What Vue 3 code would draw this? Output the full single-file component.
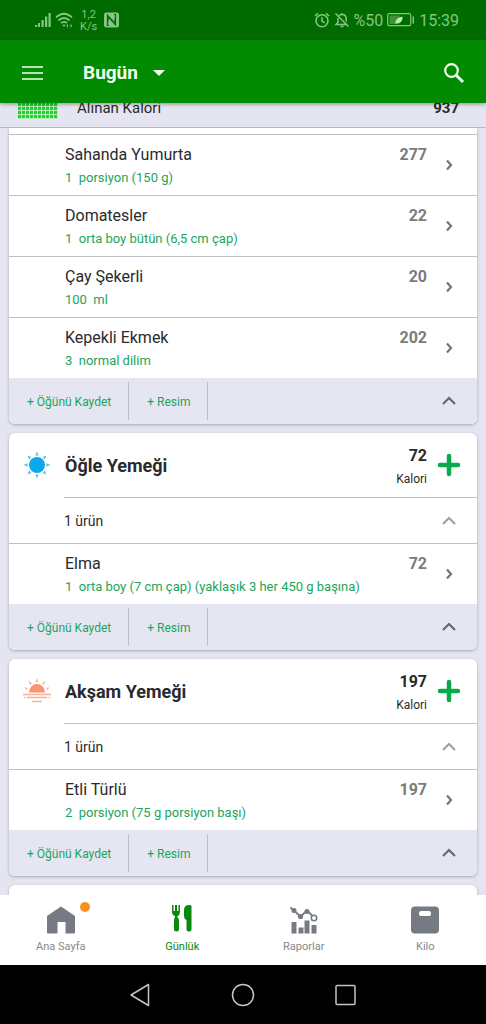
<script setup>
import { ref } from 'vue'

const breakfast = [
  { name: 'Sahanda Yumurta', qty: '1', unit: 'porsiyon (150 g)', kcal: 277 },
  { name: 'Domatesler', qty: '1', unit: 'orta boy bütün (6,5 cm çap)', kcal: 22 },
  { name: 'Çay Şekerli', qty: '100', unit: 'ml', kcal: 20 },
  { name: 'Kepekli Ekmek', qty: '3', unit: 'normal dilim', kcal: 202 }
]

const meals = [
  { id: 'breakfast', items: breakfast },
  {
    id: 'lunch',
    title: 'Öğle Yemeği',
    total: 72,
    count: '1 ürün',
    items: [{ name: 'Elma', qty: '1', unit: 'orta boy (7 cm çap) (yaklaşık 3 her 450 g başına)', kcal: 72 }]
  },
  {
    id: 'dinner',
    title: 'Akşam Yemeği',
    total: 197,
    count: '1 ürün',
    items: [{ name: 'Etli Türlü', qty: '2', unit: 'porsiyon (75 g porsiyon başı)', kcal: 197 }]
  }
]

const tabs = [
  { id: 'home', label: 'Ana Sayfa' },
  { id: 'diary', label: 'Günlük' },
  { id: 'reports', label: 'Raporlar' },
  { id: 'weight', label: 'Kilo' }
]
const active = ref('diary')
const rays = [0, 45, 90, 135, 180, 225, 270, 315]
</script>

<template>
  <div class="screen">
    <div class="status">
      <svg class="signal" width="16" height="16" viewBox="0 0 16 16" fill="currentColor">
        <path d="M0 13h2v2H0zM3 11h2v4H3zM6.500 8h2.200v7H6.500zM10 4.500h2.200V15H10zM13.500 1h2.200v14h-2.200z" />
      </svg>
      <svg class="wifi" width="18" height="16" viewBox="0 0 18 16" fill="none" stroke="currentColor" stroke-width="1.700">
        <path d="M1 5.500Q9-2 17 5.500M3.500 8.500Q9 3.500 14.500 8.500M6 11.200Q9 8.500 12 11" />
        <path d="M7.300 12.800h3.400L9 15zM11.300 13.800l1.700-2v4zM17.200 13.800l-1.700-2v4z" fill="currentColor" stroke="none" />
      </svg>
      <div class="speed"><span>1,2</span><span>K/s</span></div>
      <svg class="nfc" width="15" height="16" viewBox="0 0 15 16">
        <rect y=".5" width="15" height="15" rx="2.500" fill="currentColor" />
        <path d="M5 13.500H3.500V3.200L11 11.500V6M10 2.500h1.500v10.300L4 4.500V10" fill="none" stroke="#006c00" stroke-width="1.200" />
      </svg>
      <span class="grow"></span>
      <svg class="alarm" width="16" height="16" viewBox="0 0 16 16" fill="none" stroke="currentColor" stroke-width="1.600">
        <circle cx="8" cy="8.800" r="6" />
        <path d="M8 5.200v3.800l2.600 1.800M1 4l3-2.600M15 4l-3-2.600" />
      </svg>
      <svg class="bell" width="16" height="16" viewBox="0 0 16 16" fill="none" stroke="currentColor" stroke-width="1.500">
        <path d="M5 3.600C6 2.700 7 2.600 8 2.600c3 0 4.200 2 4.200 4.600v2.200M3.900 6v4.500L2 12.600h10.500M6.500 14.500h3M8 1v1.600M1.500 1.500l13 13" />
      </svg>
      <span class="percent">%50</span>
      <svg class="battery" width="28" height="14" viewBox="0 0 28 14">
        <rect x=".7" y=".7" width="23" height="12" rx="1.500" fill="none" stroke="currentColor" stroke-width="1.200" />
        <rect x="2.500" y="2.500" width="10" height="8.500" fill="currentColor" opacity=".45" />
        <path d="M8.500 11c-.5-4 2-6.500 7-7.500.4 4-1.500 7-6 6.800z" fill="#c2eda9" />
        <rect x="25.500" y="3.500" width="1.500" height="7" fill="currentColor" />
      </svg>
      <span class="clock">15:39</span>
    </div>

    <header class="appbar">
      <button class="menu" aria-label="Menü">
        <svg width="22" height="16" viewBox="0 0 22 16" fill="currentColor"><path d="M0 1h21v2H0zM0 7h21v2H0zM0 13h21v2H0z" /></svg>
      </button>
      <button class="day">
        <span>Bugün</span>
        <svg width="12" height="6" viewBox="0 0 12 6" fill="currentColor"><path d="M0 0h12L6 6z" /></svg>
      </button>
      <button class="search" aria-label="Ara">
        <svg width="22" height="22" viewBox="0 0 22 22" fill="none" stroke="currentColor">
          <circle cx="8.500" cy="8.500" r="6.300" stroke-width="2.200" />
          <path d="M13 13l7 7" stroke-width="3" />
        </svg>
      </button>
    </header>

    <div class="summary">
      <svg width="40" height="40" viewBox="0 0 40 40">
        <defs>
          <pattern id="cells" width="4" height="4" patternUnits="userSpaceOnUse">
            <rect width="4" height="4" fill="#b5f3b5" />
            <rect width="3" height="3" fill="#22cf35" />
          </pattern>
        </defs>
        <rect width="40" height="40" fill="url(#cells)" />
      </svg>
      <span class="summary-label">Alınan Kalori</span>
      <span class="summary-value">937</span>
    </div>

    <main class="diary">
      <section v-for="meal in meals" :key="meal.id" class="card" :class="{ partial: !meal.title }">
        <template v-if="meal.title">
          <div class="meal-head">
            <svg v-if="meal.id === 'lunch'" class="meal-icon" width="28" height="28" viewBox="-14 -14 28 28">
              <circle r="8" fill="#0aa9ee" />
              <path v-for="r in rays" :key="r" d="M-1.700-9.500h3.400L0-13.500z" :transform="`rotate(${r})`" fill="#5cc5dc" />
            </svg>
            <svg v-else class="meal-icon" width="28" height="28" viewBox="0 0 28 28">
              <path d="M6 15.500a8 8.500 0 0 1 16 0z" fill="#fb9472" />
              <path d="M12.700 5h2.600L14 1zM7.200 8L9 6.200 5.500 3.800zM20.800 8L19 6.200l3.500-2.400zM3.600 13.200l1-2.500-3-.2zM24.400 13.200l-1-2.500 3-.2z" fill="#f6b09a" />
              <path d="M0 17.500h28M4 20.500h20M1 20.500h1.500M25.500 20.500H27M9 24.500h10" stroke="#f9b09a" stroke-width="1.400" />
            </svg>
            <h2>{{ meal.title }}</h2>
            <div class="total"><strong>{{ meal.total }}</strong><span>Kalori</span></div>
            <button class="side-btn" aria-label="Ekle">
              <svg width="24" height="24" viewBox="0 0 24 24" fill="none" stroke="#07ab4b" stroke-width="4.500" stroke-linecap="round"><path d="M12 3v18M3 12h18" /></svg>
            </button>
          </div>
          <div class="count">
            <span>{{ meal.count }}</span>
            <button class="side-btn pale" aria-label="Daralt">
              <svg width="14" height="10" viewBox="0 0 14 10" fill="none" stroke="currentColor" stroke-width="2.200"><path d="M1 8l6-6 6 6" /></svg>
            </button>
          </div>
        </template>
        <ul>
          <li v-for="item in meal.items" :key="item.name">
            <div class="food">
              <span class="name">{{ item.name }}</span>
              <span class="portion">{{ item.qty + '  ' + item.unit }}</span>
            </div>
            <span class="kcal">{{ item.kcal }}</span>
            <button class="side-btn" :aria-label="item.name">
              <svg width="8" height="12" viewBox="0 0 8 12" fill="none" stroke="currentColor" stroke-width="2.200"><path d="M2 1.500L6 6l-4 4.500" /></svg>
            </button>
          </li>
        </ul>
        <div class="foot">
          <button class="action">+ Öğünü Kaydet</button>
          <button class="action">+ Resim</button>
          <button class="side-btn fold" aria-label="Kapat">
            <svg width="14" height="10" viewBox="0 0 14 10" fill="none" stroke="currentColor" stroke-width="2.200"><path d="M1 8l6-6 6 6" /></svg>
          </button>
        </div>
      </section>
      <section class="card next"></section>
    </main>

    <nav class="tabs">
      <button v-for="tab in tabs" :key="tab.id" :class="{ on: tab.id === active }" @click="active = tab.id">
        <svg v-if="tab.id === 'home'" width="30" height="30" viewBox="0 0 30 30" fill="currentColor">
          <path d="M15 1.500L29 11v16.500q0 1-1 1h-8.500V17h-8v11.500H2q-1 0-1-1V11z" />
        </svg>
        <svg v-else-if="tab.id === 'diary'" width="30" height="30" viewBox="0 0 30 30" fill="currentColor">
          <path d="M5 0h1.500v6H8V0h2v6h1.500V0H13v7q0 3-2.500 4v1.500q1.500 1 1.500 3V24q0 2.500-2.500 2.500T7 24v-8.500q0-2 1-3V11Q5 10 5 7z" />
          <path d="M24.500 1v23q0 2.500-2.500 2.500T19.500 24v-9q-2.500-1-2.500-4V5q0-5 5.500-5 2 0 2 1z" />
        </svg>
        <svg v-else-if="tab.id === 'reports'" width="30" height="30" viewBox="0 0 30 30" fill="currentColor">
          <path d="M2.500 17h5v11.500h-5zM9.500 22.500h5v6h-5zM15.500 15.500h5v13h-5zM22.500 20h5v8.500h-5z" />
          <path d="M1.500 2.500l10 9 6.500-6 7 7" fill="none" stroke="currentColor" stroke-width="1.800" />
          <circle cx="5" cy="5.500" r="2.500" /><circle cx="11.500" cy="11.500" r="2.600" /><circle cx="18" cy="6.500" r="2.500" />
          <circle cx="25" cy="13" r="2.700" fill="#fff" stroke="currentColor" stroke-width="1.600" />
        </svg>
        <svg v-else width="30" height="30" viewBox="0 0 30 30" fill="currentColor">
          <rect x="1" y="1.500" width="28" height="27" rx="4" />
          <rect x="9" y="6" width="12" height="5" rx="2" fill="#fff" />
        </svg>
        <span>{{ tab.label }}</span>
        <i v-if="tab.id === 'home'" class="dot"></i>
      </button>
    </nav>

    <div class="sysnav">
      <button aria-label="Geri"><svg width="24" height="24" viewBox="0 0 24 24"><path d="M2 12L19.500 1.500v21z" /></svg></button>
      <button aria-label="Ana ekran"><svg width="24" height="24" viewBox="0 0 24 24"><circle cx="12" cy="12" r="10.500" /></svg></button>
      <button aria-label="Son uygulamalar"><svg width="24" height="24" viewBox="0 0 24 24"><rect x="3" y="2.500" width="19" height="19" rx="1" /></svg></button>
    </div>
  </div>
</template>

<style>
body { margin: 0; background: #000; }
</style>

<style scoped>
* { box-sizing: border-box; }
.screen {
  height: 100vh;
  display: flex;
  flex-direction: column;
  overflow: hidden;
  font-family: Roboto, "Noto Sans", sans-serif;
  color: #2a2a2d;
  background: #e5e5f1;
}
button {
  margin: 0;
  padding: 0;
  border: 0;
  background: none;
  font: inherit;
  color: inherit;
  cursor: pointer;
}
svg { display: block; flex: none; }
.grow { flex: 1; }

.status {
  flex: none;
  height: 40px;
  display: flex;
  align-items: center;
  padding: 0 27px 0 35px;
  background: #006c00;
  color: #84c682;
  font-size: 16px;
}
.wifi { margin-left: 4px; }
.speed {
  display: flex;
  flex-direction: column;
  align-items: center;
  margin: 0 7px;
  padding-top: 2px;
  font-size: 11px;
  line-height: 12px;
}
.bell { margin: 0 3px 0 4px; }
.battery { margin: 0 4px; }

.appbar {
  position: relative;
  flex: none;
  height: 63px;
  display: flex;
  align-items: center;
  padding: 2px 21px 0 22px;
  background: #018a02;
  color: #f0fff0;
  box-shadow: 0 1px 4px rgba(0, 0, 0, 0.4);
}
.menu { color: #b4e6b1; }
.day {
  display: flex;
  align-items: center;
  gap: 15px;
  margin-left: 39px;
  font-size: 19px;
  font-weight: 700;
}
.search { margin-left: auto; }

.summary {
  flex: none;
  height: 25px;
  display: flex;
  align-items: flex-end;
  padding: 0 27px 8px 18px;
  border-bottom: 1px solid #b8b8c8;
  font-size: 15px;
  line-height: 22px;
}
.summary-label { margin-left: 19px; }
.summary-value { margin-left: auto; font-weight: 700; }

.diary {
  flex: 1;
  min-height: 0;
  overflow: hidden;
  display: flex;
  flex-direction: column;
  gap: 9px;
  padding: 0 9px;
}
.card {
  flex: none;
  border-radius: 6px;
  background: #fff;
  box-shadow: 0 1px 3px rgba(50, 50, 80, 0.35);
}
.card.partial { padding-top: 6px; border-radius: 0 0 6px 6px; }
.card.next { height: 64px; }
.side-btn {
  width: 44px;
  height: 40px;
  display: flex;
  align-items: center;
  justify-content: center;
  color: #757578;
}
.count .pale { color: #a2a2a6; }
.meal-head {
  height: 64px;
  display: flex;
  align-items: center;
  padding: 0 6px 0 14px;
}
h2 {
  flex: 1;
  margin: 0 0 0 14px;
  padding-top: 2px;
  font-size: 18px;
  line-height: 24px;
  font-weight: 700;
}
.total {
  display: flex;
  flex-direction: column;
  align-items: flex-end;
  padding-top: 4px;
  font-size: 12px;
  line-height: 22px;
}
.total strong { font-size: 16px; line-height: 24px; }
.count {
  height: 46px;
  display: flex;
  align-items: center;
  justify-content: space-between;
  margin-left: 55px;
  padding-right: 6px;
  border-top: 1px solid #c0c0c4;
  font-size: 14px;
}
ul { margin: 0; padding: 0; list-style: none; }
li {
  display: flex;
  align-items: center;
  padding: 8px 6px 6px 56px;
  border-top: 1px solid #c0c0c4;
}
.food { flex: 1; display: flex; flex-direction: column; }
.name { font-size: 16px; line-height: 24px; }
.portion { font-size: 13px; line-height: 22px; color: #1ba55c; white-space: pre; }
.kcal {
  align-self: flex-start;
  font-size: 16px;
  line-height: 24px;
  font-weight: 700;
  color: #7b7b7e;
}
li .side-btn { padding-bottom: 2px; }
.foot {
  height: 46px;
  display: flex;
  align-items: center;
  padding-right: 6px;
  border-radius: 0 0 6px 6px;
  background: #e6e6f2;
}
.action {
  height: 38px;
  padding: 2px 17px 0 18px;
  border-right: 1px solid #bdbdca;
  font-size: 12px;
  color: #1ba55c;
}
.fold { margin-left: auto; color: #686874; }

.tabs {
  flex: none;
  height: 70px;
  display: grid;
  grid-template-columns: repeat(4, 1fr);
  background: #fff;
}
.tabs button {
  position: relative;
  display: flex;
  flex-direction: column;
  align-items: center;
  padding-top: 10px;
  font-size: 11px;
  line-height: 24px;
  color: #767a82;
}
.tabs button span { color: #85888d; }
.tabs button.on, .tabs button.on span { color: #078a0c; }
.dot {
  position: absolute;
  top: 7px;
  left: calc(50% + 19px);
  width: 10px;
  height: 10px;
  border-radius: 50%;
  background: #f9901f;
}
.sysnav {
  flex: none;
  height: 59px;
  display: grid;
  grid-template-columns: repeat(3, 21%);
  justify-content: center;
  justify-items: center;
  align-items: center;
  background: #000;
}
.sysnav svg { fill: none; stroke: #c4c4c4; stroke-width: 1.500; stroke-linejoin: round; }
</style>
